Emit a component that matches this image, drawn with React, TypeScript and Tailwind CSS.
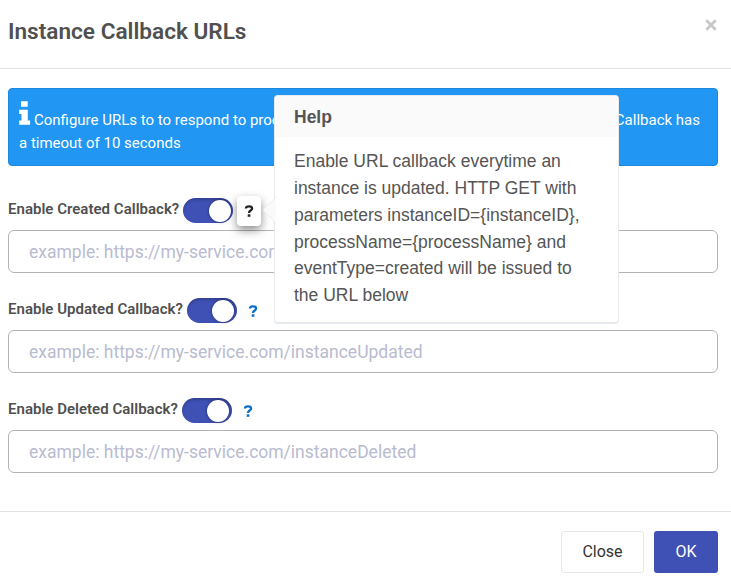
interface FieldProps {
  label: string;
  placeholder: string;
  active?: boolean;
}

function Toggle() {
  return (
    <span className="ml-[4px] flex h-[25px] w-[50px] shrink-0 items-center justify-end rounded-full bg-[#3f51b5] pr-[2.7px] shadow-[inset_0_2px_3px_rgba(0,0,0,0.2)]">
      <span className="h-[22px] w-[22px] rounded-full bg-white shadow-[0_0_3px_rgba(0,0,0,0.5)]" />
    </span>
  );
}

function InfoIcon() {
  return (
    <svg className="mb-[6px] mr-[3px] h-[25px] w-[12px]" viewBox="0 0 12 25" fill="currentColor">
      <path d="M2 .3h6.700v5.400H2zM.2 8.700h8.600v10.800h2.300v4.300H.2v-4.300h2.300v-6.500H.2z" />
    </svg>
  );
}

function QuestionIcon() {
  return (
    <svg width="10" height="12" viewBox="0 0 10 12">
      <path d="M1.900 3.500C2 2 3.300 1.300 5 1.300s3.100.7 3.100 2.200C8.100 5.600 5 5.400 5 7.900" fill="none" stroke="currentColor" strokeWidth="2.300" />
      <path d="M3.700 9.300h2.700v2.500H3.700z" fill="currentColor" />
    </svg>
  );
}

function Field({ label, placeholder, active = false }: FieldProps) {
  return (
    <div className="h-[100px]">
      <div className="flex h-[33px] items-center">
        <label className="-mt-[3px] whitespace-nowrap text-[15px] font-semibold leading-5 tracking-[0.02px] text-[#505050]">
          {label}
        </label>
        <Toggle />
        <button
          className={
            active
              ? "ml-1 flex h-[30px] w-[24px] items-center justify-center rounded bg-white text-[#222] shadow-[0_4px_10px_rgba(0,0,0,0.45)]"
              : "ml-1 flex h-[30px] w-[24px] items-center justify-center text-[#0c6fca]"
          }
        >
          <QuestionIcon />
        </button>
      </div>
      <input
        className="mt-[3px] block h-[43px] w-full rounded-[6px] border border-[#b3b3b3] bg-white px-5 pt-px text-[17.5px] text-[#555] outline-none placeholder:text-[#b9bbcf]"
        placeholder={placeholder}
      />
    </div>
  );
}

function HelpPopover() {
  return (
    <div className="absolute left-[274px] top-[95px] h-[229px] w-[345px] rounded-[4px] border border-b-2 border-[#e6eaee] bg-white font-['Liberation_Sans',Arial,sans-serif] text-[#555]">
      <svg className="absolute -left-[13px] top-[99px]" width="14" height="30" viewBox="0 0 14 30">
        <path d="M14 2L1 15l13 13" fill="#fafafa" stroke="#ececec" />
      </svg>
      <h3 className="mx-px flex h-[41px] items-center rounded-t-[4px] bg-[#fafafa] px-[18px] pt-[2px] text-[17.5px] font-bold">
        Help
      </h3>
      <div className="px-[19px] pt-[11.3px] text-[17.5px] leading-[26.8px]">
        <div>Enable URL callback everytime an</div>
        <div>instance is updated. HTTP GET with</div>
        <div>parameters instanceID={"{instanceID}"},</div>
        <div>processName={"{processName}"} and</div>
        <div>eventType=created will be issued to</div>
        <div>the URL below</div>
      </div>
    </div>
  );
}

export default function App() {
  return (
    <div className="relative flex h-[581px] w-[731px] flex-col overflow-hidden bg-white font-[Roboto,sans-serif]">
      <header className="flex h-[69px] shrink-0 items-start justify-between border-b border-[#e2e2e2] px-2">
        <h1 className="mt-[16px] text-[22.6px] font-semibold leading-8 text-[#505050]">Instance Callback URLs</h1>
        <button aria-label="Close" className="mr-[6px] mt-[19px]">
          <svg width="12" height="12" viewBox="0 0 12 12">
            <path d="M1.300 1.300l9.400 9.400M10.700 1.300l-9.400 9.400" stroke="#c8c8c8" strokeWidth="2.8" />
          </svg>
        </button>
      </header>
      <main className="flex h-[442px] shrink-0 flex-col px-2 pr-[13px] pt-[19px]">
        <div className="h-[78px] shrink-0 rounded-[4px] border border-[#1e88dc] bg-[#2196f3] px-[10px] pt-[12px] text-[15px] text-white">
          <div className="flex h-[31px] items-end justify-between pr-[7px] leading-[23px]">
            <span className="flex items-end">
              <InfoIcon />
              Configure URLs to to respond to proc
            </span>
            <span>Callback has</span>
          </div>
          <div className="leading-[23px]">a timeout of 10 seconds</div>
        </div>
        <div className="mt-[28px]">
          <Field label="Enable Created Callback?" placeholder="example: https://my-service.com/instanceCreated" active />
          <Field label="Enable Updated Callback?" placeholder="example: https://my-service.com/instanceUpdated" />
          <Field label="Enable Deleted Callback?" placeholder="example: https://my-service.com/instanceDeleted" />
        </div>
      </main>
      <footer className="flex h-[70px] shrink-0 items-start justify-end gap-[10px] border-t border-[#e2e2e2] pr-[13px] pt-[19px] text-base">
        <button className="h-[42px] w-[83px] rounded-[3px] border border-[#e6e6e6] bg-white text-[#333]">Close</button>
        <button className="h-[42px] w-[64px] rounded-[3px] bg-[#3f51b5] text-white">OK</button>
      </footer>
      <HelpPopover />
    </div>
  );
}
